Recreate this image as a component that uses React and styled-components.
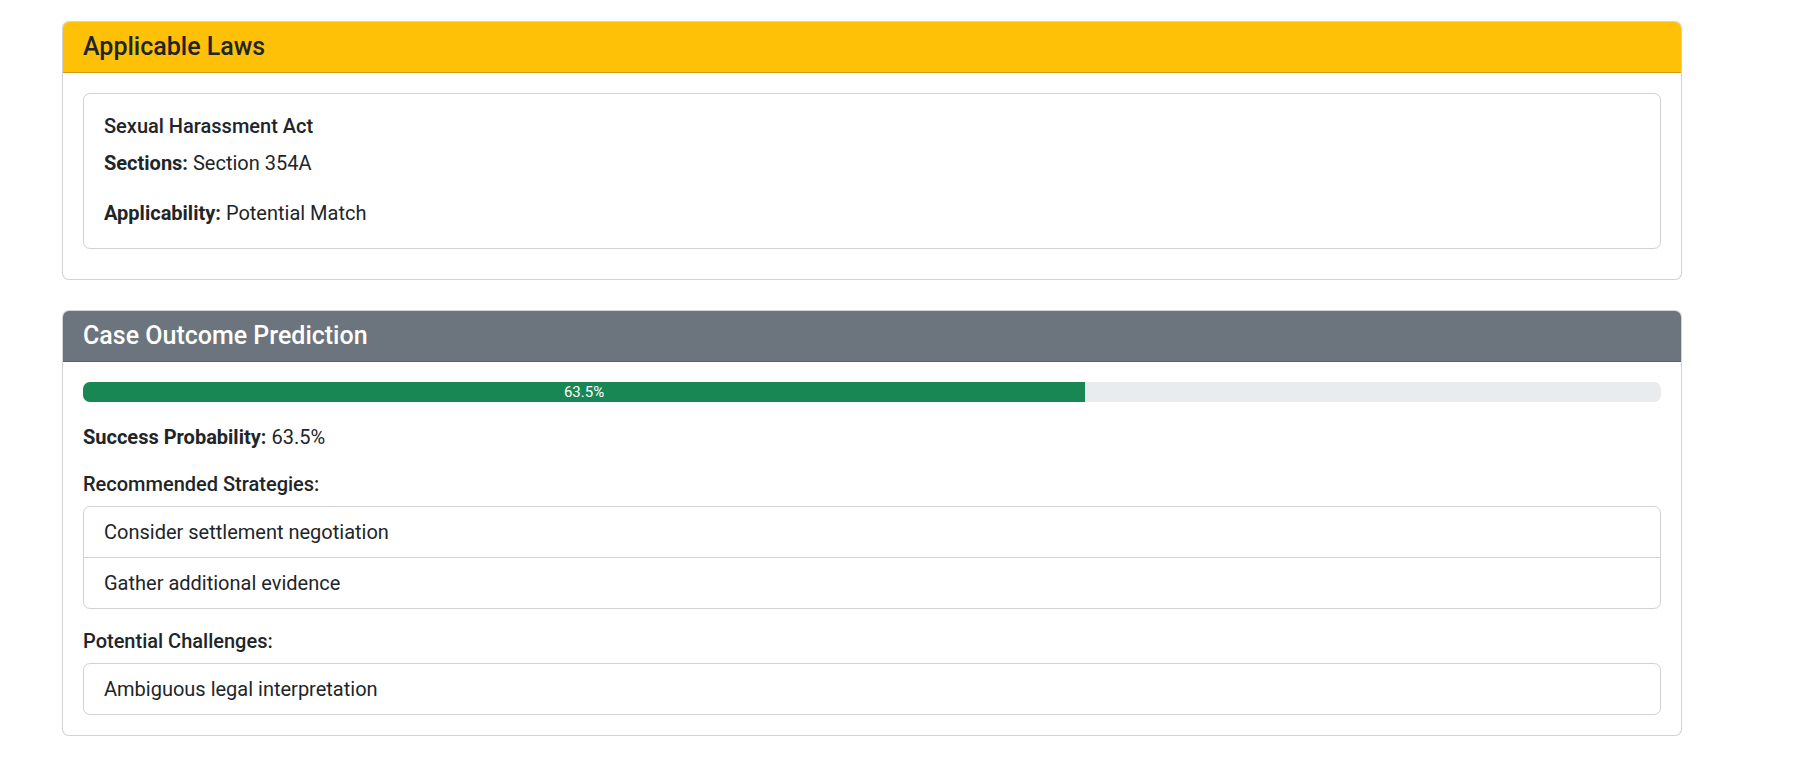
import React from "react";
import styled, { createGlobalStyle } from "styled-components";

const GlobalStyle = createGlobalStyle`
  body {
    margin: 0;
    background: #fff;
    color: #212529;
    font-family: "Roboto", "Liberation Sans", sans-serif;
    font-size: 20px;
    line-height: 30px;
  }
`;

const Page = styled.div`
  width: 1620px;
  padding: 21px 0 0 62px;
`;

const Card = styled.div`
  border: 1px solid rgba(0, 0, 0, 0.175);
  border-radius: 7px;
  margin-bottom: ${props => props.mb || 0}px;
  overflow: hidden;
  background: #fff;
`;

const CardHeader = styled.div`
  background: ${props => props.bg};
  color: ${props => props.fg};
  padding: 10px 20px;
  border-bottom: 1px solid rgba(0, 0, 0, 0.175);
`;

const HeaderTitle = styled.h5`
  margin: 0;
  font-size: 25px;
  font-weight: 500;
  line-height: 30px;
`;

const CardBody = styled.div`
  padding: 20px;
`;

const LawCard = styled.div`
  border: 1px solid rgba(0, 0, 0, 0.175);
  border-radius: 7px;
  padding: 20px;
  margin-bottom: 10px;
`;

const SubTitle = styled.h6`
  margin: 0 0 10px;
  font-size: 20px;
  font-weight: 500;
  line-height: 24px;
`;

const Text = styled.p`
  margin: 0 0 ${props => (props.last ? 0 : 20)}px;
`;

const Progress = styled.div`
  display: flex;
  height: 20px;
  background: #e9ecef;
  border-radius: 7px;
  overflow: hidden;
  margin-bottom: 20px;
  font-size: 15px;
`;

const ProgressBar = styled.div`
  display: flex;
  align-items: center;
  justify-content: center;
  background: #198754;
  color: #fff;
  white-space: nowrap;
`;

const ListGroup = styled.ul`
  list-style: none;
  margin: 0 0 ${props => props.mb || 0}px;
  padding: 0;
  border: 1px solid rgba(0, 0, 0, 0.175);
  border-radius: 7px;
`;

const ListItem = styled.li`
  padding: 10px 20px;
  & + & {
    border-top: 1px solid rgba(0, 0, 0, 0.175);
  }
`;

const prediction = {
  probability: 63.5,
  strategies: ["Consider settlement negotiation", "Gather additional evidence"],
  challenges: ["Ambiguous legal interpretation"],
};

export default function App() {
  return (
    <>
      <GlobalStyle />
      <Page>
        <Card mb={30}>
          <CardHeader bg="#ffc107" fg="#212529">
            <HeaderTitle>Applicable Laws</HeaderTitle>
          </CardHeader>
          <CardBody>
            <LawCard>
              <SubTitle>Sexual Harassment Act</SubTitle>
              <Text>
                <strong>Sections:</strong> Section 354A
              </Text>
              <Text last>
                <strong>Applicability:</strong> Potential Match
              </Text>
            </LawCard>
          </CardBody>
        </Card>

        <Card>
          <CardHeader bg="#6c757d" fg="#fff">
            <HeaderTitle>Case Outcome Prediction</HeaderTitle>
          </CardHeader>
          <CardBody>
            <Progress>
              <ProgressBar style={{ width: prediction.probability + "%" }}>
                {prediction.probability}%
              </ProgressBar>
            </Progress>
            <Text>
              <strong>Success Probability:</strong> {prediction.probability}%
            </Text>
            <SubTitle>Recommended Strategies:</SubTitle>
            <ListGroup mb={20}>
              {prediction.strategies.map(s => (
                <ListItem key={s}>{s}</ListItem>
              ))}
            </ListGroup>
            <SubTitle>Potential Challenges:</SubTitle>
            <ListGroup>
              {prediction.challenges.map(c => (
                <ListItem key={c}>{c}</ListItem>
              ))}
            </ListGroup>
          </CardBody>
        </Card>
      </Page>
    </>
  );
}
